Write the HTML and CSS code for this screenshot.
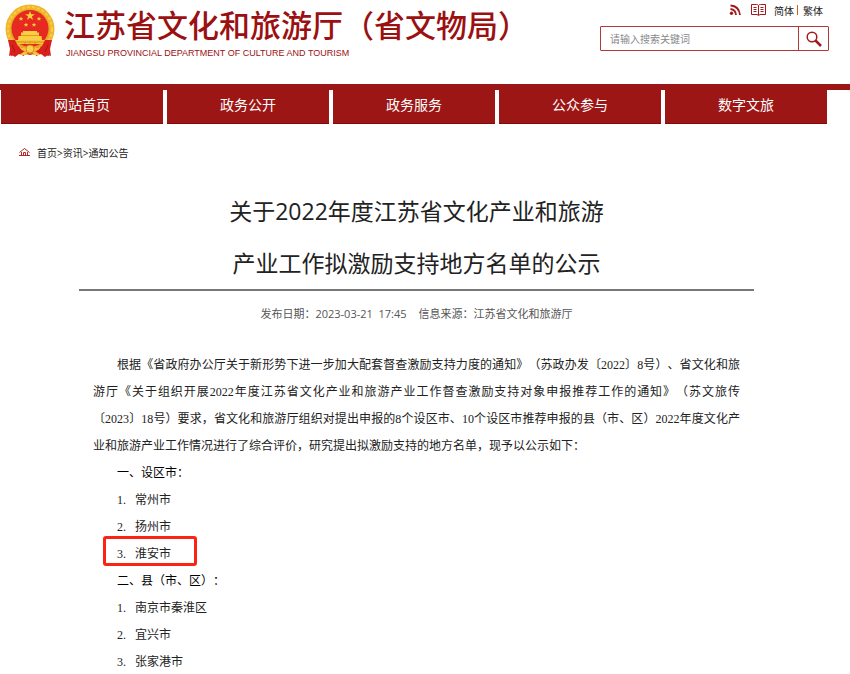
FILE: index.html
```html
<!DOCTYPE html>
<html lang="zh-CN">
<head>
<meta charset="utf-8">
<meta name="viewport" content="width=device-width, initial-scale=1">
<title>江苏省文化和旅游厅（省文物局）</title>
<link rel="stylesheet" href="styles.css">
</head>
<body>
<header class="site-header">
  <a class="brand" href="#">
    <svg class="emblem" viewBox="0 0 50 54" aria-hidden="true">
      <path d="M7 35 L6 52 L17 49 L25 51 L33 49 L44 52 L43 35Z" fill="#d9201d"/>
      <circle cx="25" cy="25" r="24.500" fill="#f0b52c"/>
      <circle cx="25" cy="25" r="22" fill="none" stroke="#f6cc48" stroke-width="2" stroke-dasharray="3 2"/>
      <circle cx="25" cy="25" r="19.500" fill="#e3a21f"/>
      <circle cx="25" cy="24.500" r="18.500" fill="#e62a22"/>
      <path d="M25 7l1.200 3.300h3.600l-2.900 2.100 1.100 3.500-3-2.100-3 2.100 1.100-3.500-2.900-2.100h3.600z" fill="#fbd13c"/>
      <path id="star" d="M16 12.500l.6 1.600h1.700l-1.300 1 .5 1.700-1.500-1-1.500 1 .5-1.700-1.300-1h1.700z" fill="#fbd13c"/>
      <use href="#star" x="18"/>
      <use href="#star" x="5" y="6"/>
      <use href="#star" x="13" y="6"/>
      <path d="M18 27h14v1.500h2V32h2.500l.5 4H13l.5-4H16v-3.500h2z" fill="#f9cf45"/>
      <path d="M16 31.500h18" stroke="#e09a20" stroke-width="1"/>
      <path d="M9 36h32l-2 4H11z" fill="#f7c53a"/>
      <path d="M11 38h28M20 38v2m5-2v2m5-2v2" stroke="#d98d1c" stroke-width="1"/>
      <path d="M3 36l7 0 3 6 8 3-2 7-5-2-4 3-3-2-3 1 1-7zM47 36l-7 0-3 6-8 3 2 7 5-2 4 3 3-2 3 1-1-7z" fill="#d9201d"/>
      <path d="M14 42q5 4 11 0 6 4 11 0-2 6-8 5l-3 2-3-2q-6 1-8-5zM14 51l6-4 3 4zM36 51l-6-4-3 4z" fill="#f6c238"/>
      <circle cx="25" cy="45" r="4" fill="#f8d150" stroke="#d98d1c"/>
      <path d="M7 41l3 7M43 41l-3 7" stroke="#a91614"/>
    </svg>
    <span class="brand-text">
      <span class="brand-name">江苏省文化和旅游厅（省文物局）</span>
      <span class="brand-en">JIANGSU PROVINCIAL DEPARTMENT OF CULTURE AND TOURISM</span>
    </span>
  </a>
  <div class="tools">
    <div class="links">
      <a class="icon-link" href="#" aria-label="RSS">
        <svg width="12" height="12" viewBox="0 0 12 12" fill="none" stroke="#a3191a" stroke-width="1.800"><circle cx="2.500" cy="9.300" r="1.700" fill="#a3191a" stroke="none"/><path d="M1.500 5q5 .5 5.500 6M1.500 1.500q8.500 .5 9.500 9.500"/></svg>
      </a>
      <a class="icon-link book" href="#" aria-label="阅读">
        <svg width="15" height="12" viewBox="0 0 15 12" fill="none" stroke="#a3191a"><path d="M7.500 1.500Q7 .5 5.500.5h-5v10h5.500l1.500 1 1.500-1h5.500V.5h-5Q8 .5 7.500 1.500v9.500M2.500 3.500h3m-3 2h3m-3 2h3m4-4h3m-3 2h3m-3 2h3"/></svg>
      </a>
      <a href="#">简体</a><span class="bar"></span><a href="#">繁体</a>
    </div>
    <form class="search">
      <input type="text" aria-label="搜索" placeholder="请输入搜索关键词">
      <button type="button" aria-label="搜索">
        <svg width="16" height="16" viewBox="0 0 16 16" fill="none" stroke="#a3191a"><circle cx="6" cy="6" r="4.800" stroke-width="1.500"/><path d="M9.500 9.500l5.500 5.500" stroke-width="2.500"/></svg>
      </button>
    </form>
  </div>
</header>
<nav class="nav">
  <a href="#">网站首页</a>
  <a href="#">政务公开</a>
  <a href="#">政务服务</a>
  <a href="#">公众参与</a>
  <a href="#">数字文旅</a>
</nav>
<div class="crumbs">
  <svg width="11" height="8" viewBox="0 0 11 8" fill="none" stroke="#b3282a"><path d="M.5 4.500l5-4 5 4M2.500 4v3.500M8.500 4v3.500M0 7.500h11M4.500 7V4.500h2V7"/></svg>
  <div><a href="#">首页</a>&gt;<a href="#">资讯</a>&gt;<a href="#">通知公告</a></div>
</div>
<main class="article">
  <h1>关于2022年度江苏省文化产业和旅游<br>产业工作拟激励支持地方名单的公示</h1>
  <div class="meta">
    <span>发布日期：2023-03-21&nbsp; 17:45</span>
    <span>信息来源：江苏省文化和旅游厅</span>
  </div>
  <div class="body">
    <p>根据《省政府办公厅关于新形势下进一步加大配套督查激励支持力度的通知》（苏政办发〔2022〕8号）、省文化和旅游厅《关于组织开展2022年度江苏省文化产业和旅游产业工作督查激励支持对象申报推荐工作的通知》（苏文旅传〔2023〕18号）要求，省文化和旅游厅组织对提出申报的8个设区市、10个设区市推荐申报的县（市、区）2022年度文化产业和旅游产业工作情况进行了综合评价，研究提出拟激励支持的地方名单，现予以公示如下：</p>
    <h2>一、设区市：</h2>
    <ol>
      <li><span class="num">1.</span>常州市</li>
      <li><span class="num">2.</span>扬州市</li>
      <li class="marked"><span class="num">3.</span>淮安市</li>
    </ol>
    <h2>二、县（市、区）：</h2>
    <ol>
      <li><span class="num">1.</span>南京市秦淮区</li>
      <li><span class="num">2.</span>宜兴市</li>
      <li><span class="num">3.</span>张家港市</li>
    </ol>
  </div>
</main>
</body>
</html>
```
FILE: styles.css
```css
* {
  box-sizing: border-box;
}

body {
  margin: 0;
  background: #fff;
  color: #222;
  font-family: "Open Sans", "Noto Sans CJK SC", sans-serif;
  font-size: 10px;
  text-spacing-trim: space-all;
}

a {
  color: inherit;
  text-decoration: none;
}

svg {
  display: block;
}

.site-header {
  display: flex;
  justify-content: space-between;
  height: 84px;
  padding: 4px 21px 0 5px;
}

.brand {
  display: flex;
  gap: 9px;
  color: #9b1011;
}

.emblem {
  width: 50px;
  height: 54px;
}

.brand-text {
  display: flex;
  flex-direction: column;
  white-space: nowrap;
}

.brand-name {
  font-family: "Noto Sans CJK SC", sans-serif;
  font-size: 31px;
  font-weight: 500;
  line-height: 40px;
}

.brand-en {
  padding-left: 2px;
  font-family: "Liberation Sans", sans-serif;
  font-size: 9px;
  line-height: 18px;
}

.tools {
  width: 229px;
}

.links {
  display: flex;
  align-items: center;
  justify-content: flex-end;
  height: 12px;
  margin-bottom: 10px;
  padding-right: 6px;
}

.icon-link {
  margin-right: 10px;
}

.book {
  margin-right: 8px;
}

.bar {
  width: 1px;
  height: 10px;
  margin: 0 5px 0 3px;
  background: #c8641e;
}

.search {
  display: flex;
  height: 25px;
  border: 1px solid #b3383a;
  border-radius: 1px;
}

.search input {
  flex: 1;
  min-width: 0;
  padding: 0 9px;
  border: 0;
  font: inherit;
}

.search input::placeholder {
  color: #888;
}

.search button {
  display: grid;
  place-items: center;
  width: 30px;
  padding: 0;
  border: 0;
  border-left: 1px solid #b3383a;
  background: #fff;
}

.nav {
  display: grid;
  grid-template-columns: repeat(5, 1fr);
  gap: 4px;
  padding: 0 23px 0 1px;
  border-top: 6px solid #9b1615;
}

.nav a {
  height: 34px;
  border-bottom: 1px solid #850808;
  background: #9b1615;
  color: #fff;
  font-size: 14px;
  line-height: 30px;
  text-align: center;
}

.crumbs {
  display: flex;
  align-items: center;
  gap: 7px;
  height: 20px;
  margin-top: 18px;
  padding-left: 19px;
}

.article {
  padding: 23px 96px 0 79px;
}

h1 {
  margin: 0;
  border-bottom: 2px solid #777;
  color: #222;
  font-size: 23px;
  font-weight: 400;
  line-height: 52px;
  text-align: center;
}

.meta {
  display: flex;
  justify-content: center;
  gap: 12px;
  padding: 13px 0 28px;
  color: #555;
  font-size: 11px;
  line-height: 20px;
}

.body {
  padding: 0 14px;
  font-family: "Liberation Serif", "Noto Sans CJK SC", serif;
  font-size: 12px;
  line-height: 27px;
}

.body p {
  margin: 0;
  text-align: justify;
  text-indent: 24px;
}

.body h2 {
  margin: 0;
  padding-left: 24px;
  color: #000;
  font-size: 12px;
  font-weight: 400;
}

.body ol {
  margin: 0;
  padding: 0;
  list-style: none;
}

.body li {
  display: flex;
  padding-left: 24px;
}

.num {
  width: 18px;
}

.marked {
  width: 94px;
  margin: -5px 0 2px 10px;
  border: 3px solid #fb2313;
  border-radius: 3px;
}

.body .marked {
  padding: 7px 0 0 11px;
  line-height: 17px;
}
```
